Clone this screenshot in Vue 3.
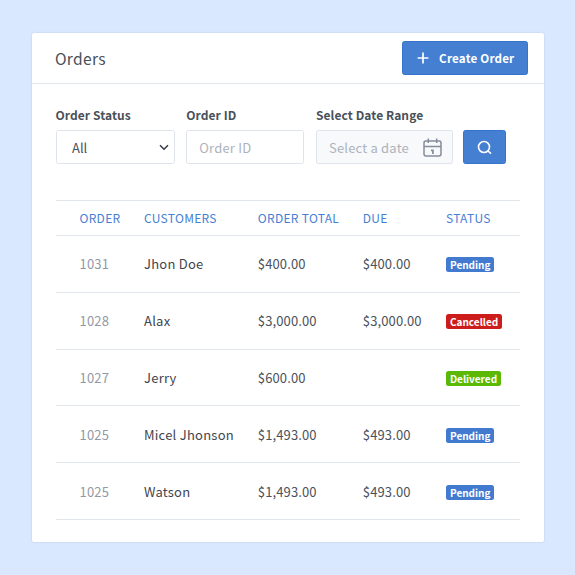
<script setup>
const orders = [
  { id: '1031', customer: 'Jhon Doe', total: '$400.00', due: '$400.00', status: 'Pending' },
  { id: '1028', customer: 'Alax', total: '$3,000.00', due: '$3,000.00', status: 'Cancelled' },
  { id: '1027', customer: 'Jerry', total: '$600.00', due: '', status: 'Delivered' },
  { id: '1025', customer: 'Micel Jhonson', total: '$1,493.00', due: '$493.00', status: 'Pending' },
  { id: '1025', customer: 'Watson', total: '$1,493.00', due: '$493.00', status: 'Pending' },
]
</script>

<template>
  <main class="page">
    <section class="card">
      <header class="head">
        <h1>Orders</h1>
        <button class="btn create">
          <svg width="12" height="12" viewBox="0 0 12 12" fill="none" stroke="#fff" stroke-width="1.7">
            <path d="M6 .6v10.8M.6 6h10.8" />
          </svg>
          <span>Create Order</span>
        </button>
      </header>

      <div class="filters">
        <div class="field status-field">
          <label>Order Status</label>
          <div class="control select">
            <span>All</span>
            <svg width="10" height="7" viewBox="0 0 10 7" fill="none" stroke="#343a46" stroke-width="1.5">
              <path d="M1 1.2l4 4 4-4" />
            </svg>
          </div>
        </div>
        <div class="field id-field">
          <label>Order ID</label>
          <div class="control placeholder">Order ID</div>
        </div>
        <div class="field date-field">
          <label>Select Date Range</label>
          <div class="control placeholder date">
            <span>Select a date</span>
            <svg width="19" height="19" viewBox="0 0 19 19" fill="none" stroke="#858d9a" stroke-width="1.5">
              <rect x="1" y="2.9" width="17" height="15" rx="1.8" />
              <path d="M1 8.4h17M5.3.5v4.6M13.7.5v4.6" />
              <path d="M8 12.4h1.9v3.6" stroke-width="1.7" />
            </svg>
          </div>
        </div>
        <button class="btn search" aria-label="Search">
          <svg width="15" height="15" viewBox="0 0 15 15" fill="none" stroke="#fff" stroke-width="1.6">
            <circle cx="7" cy="7" r="5.5" />
            <path d="M11 11l3 2.7" />
          </svg>
        </button>
      </div>

      <div class="table">
        <div class="row thead">
          <span>ORDER</span><span>CUSTOMERS</span><span>ORDER TOTAL</span><span>DUE</span><span>STATUS</span>
        </div>
        <div v-for="(o, i) in orders" :key="i" class="row">
          <span class="id">{{ o.id }}</span>
          <span class="name">{{ o.customer }}</span>
          <span>{{ o.total }}</span>
          <span>{{ o.due }}</span>
          <span class="badge" :class="o.status.toLowerCase()">{{ o.status }}</span>
        </div>
      </div>
    </section>
  </main>
</template>

<style>
body {
  background: #d9e7ff;
}
</style>

<style scoped>
.page {
  box-sizing: border-box;
  width: 575px;
  height: 575px;
  padding: 33px 31px 33px 32px;
  background: #d9e7ff;
  font-family: "Noto Sans CJK SC", "Noto Sans", sans-serif;
  font-size: 13px;
  line-height: 20px;
  color: #4b525b;
}
.card {
  width: 512px;
  height: 509px;
  background: #fff;
  border-radius: 2px;
  box-shadow: 0 0 2px rgba(90, 110, 150, 0.25);
}
.head {
  box-sizing: border-box;
  height: 51px;
  display: flex;
  align-items: center;
  justify-content: space-between;
  padding: 0 16px 0 23px;
  border-bottom: 1px solid #e1e6ea;
}
h1 {
  margin: 0;
  font-size: 15.6px;
  font-weight: 400;
  letter-spacing: 0.3px;
  color: #495057;
}
.btn {
  box-sizing: border-box;
  display: flex;
  align-items: center;
  justify-content: center;
  height: 34px;
  padding: 0;
  border: 1px solid #3673ca;
  border-radius: 2.5px;
  background: #457fd1;
  color: #fff;
  font-family: inherit;
}
.create {
  width: 126.5px;
  gap: 10px;
  padding-left: 2px;
  font-size: 11.6px;
  font-weight: 700;
  line-height: 18px;
  letter-spacing: 0.2px;
}
.create span {
  margin-top: -1px;
}
.create svg {
  margin-top: -1px;
}
.filters {
  display: flex;
  align-items: flex-end;
  padding: 21px 38px 0 24px;
}
.field {
  display: flex;
  flex-direction: column;
  gap: 5px;
}
.field label {
  font-size: 12px;
  font-weight: 700;
  letter-spacing: 0.08px;
  color: #4a515a;
}
.status-field {
  width: 119px;
  margin-right: 11.5px;
}
.status-field label {
  margin-left: -0.5px;
}
.id-field {
  width: 118px;
  margin-right: 12px;
}
.date-field {
  width: 137px;
  margin-right: 10.5px;
}
.search {
  width: 43px;
}
.control {
  box-sizing: border-box;
  height: 34px;
  display: flex;
  align-items: center;
  justify-content: space-between;
  padding: 1px 12px 0;
  border: 1px solid #dfe4ec;
  border-radius: 2.5px;
}
.select {
  padding: 1px 5px 0 15px;
}
.placeholder {
  letter-spacing: 0.2px;
  color: #adb3bd;
}
.date {
  padding-right: 10px;
  background: #f7f9fb;
}
.date svg {
  margin-top: -1px;
}
.table {
  margin: 36px 24px 0;
  border-top: 1px solid #e2e7ee;
}
.row {
  box-sizing: border-box;
  height: 56.8px;
  display: grid;
  grid-template-columns: 64.5px 113.8px 105px 83.2px 1fr;
  align-items: center;
  padding: 1px 0 0 23.5px;
  border-bottom: 1px solid #e2e7ee;
  letter-spacing: 0.13px;
}
.thead {
  height: 35px;
  padding-top: 0;
  font-size: 12px;
  letter-spacing: 0.3px;
  color: #4580d6;
}
.id {
  letter-spacing: 0.2px;
  color: #9298a6;
}
.name {
  letter-spacing: 0.24px;
  color: #3f454e;
}
.badge {
  justify-self: start;
  height: 15px;
  margin-top: 1px;
  padding: 0 4px;
  border-radius: 2.5px;
  font-size: 10px;
  font-weight: 700;
  line-height: 15px;
  letter-spacing: 0;
  color: #fff;
}
.pending {
  background: #427ad0;
}
.cancelled {
  background: #cd1c1c;
}
.delivered {
  background: #5bb805;
}
</style>
